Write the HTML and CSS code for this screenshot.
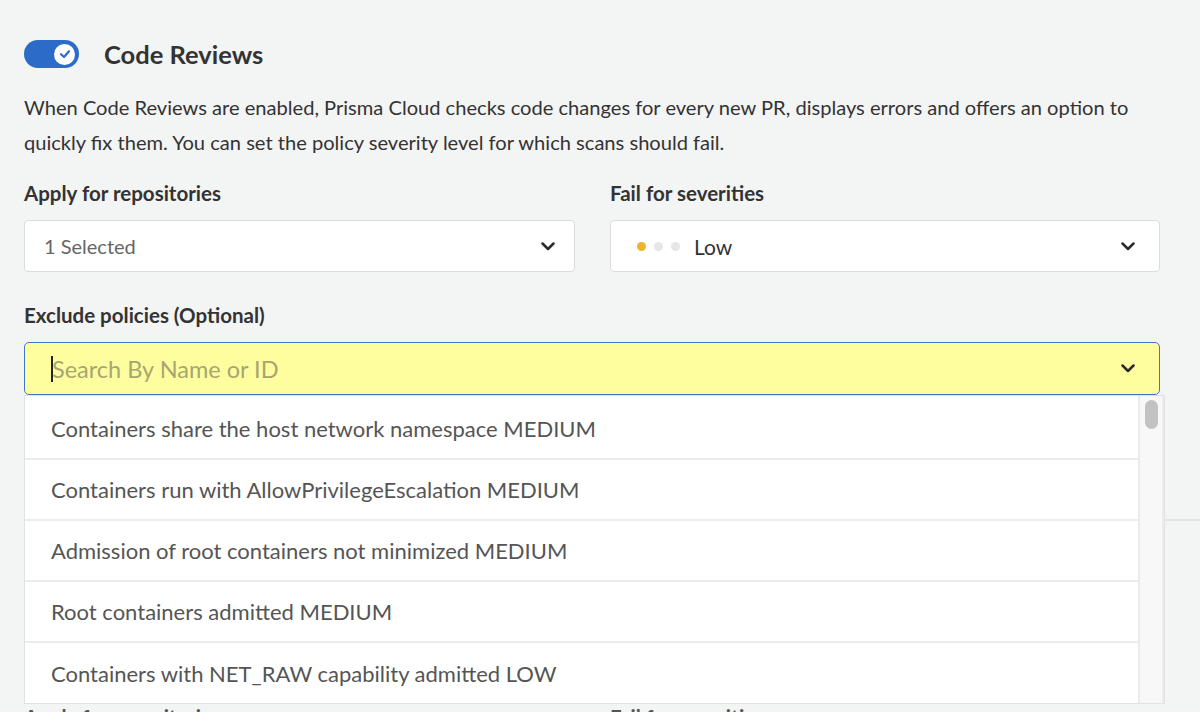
FILE: index.html
```html
<!DOCTYPE html>
<html>
<head>
<meta charset="utf-8">
<link rel="stylesheet" href="styles.css">
</head>
<body>
<div class="page">
  <div class="header">
    <div class="toggle">
      <div class="knob">
        <svg width="14" height="14" viewBox="0 0 14 14"><path d="M3 7.2 L6 10 L11 4.3" fill="none" stroke="#2d6cc9" stroke-width="2.2" stroke-linecap="round" stroke-linejoin="round"/></svg>
      </div>
    </div>
    <h1 class="title">Code Reviews</h1>
  </div>
  <p class="desc">When Code Reviews are enabled, Prisma Cloud checks code changes for every new PR, displays errors and offers an option to quickly fix them. You can set the policy severity level for which scans should fail.</p>
  <div class="cols">
    <div class="field">
      <div class="label">Apply for repositories</div>
      <div class="select">
        <span class="value">1 Selected</span>
        <svg class="chev" width="14" height="9" viewBox="0 0 14 9"><path d="M1.5 1.5 L7 7 L12.5 1.5" fill="none" stroke="#2b2b2b" stroke-width="2.5" stroke-linecap="round" stroke-linejoin="round"/></svg>
      </div>
    </div>
    <div class="field">
      <div class="label">Fail for severities</div>
      <div class="select sev">
        <span class="dots"><i class="dot on"></i><i class="dot"></i><i class="dot"></i></span>
        <span class="value dark">Low</span>
        <svg class="chev" width="14" height="9" viewBox="0 0 14 9"><path d="M1.5 1.5 L7 7 L12.5 1.5" fill="none" stroke="#2b2b2b" stroke-width="2.5" stroke-linecap="round" stroke-linejoin="round"/></svg>
      </div>
    </div>
  </div>
  <div class="label excl">Exclude policies (Optional)</div>
  <div class="combo">
    <div class="search">
      <span class="caret"></span>
      <span class="placeholder">Search By Name or ID</span>
      <svg class="chev" width="14" height="9" viewBox="0 0 14 9"><path d="M1.5 1.5 L7 7 L12.5 1.5" fill="none" stroke="#2b2b2b" stroke-width="2.5" stroke-linecap="round" stroke-linejoin="round"/></svg>
    </div>
    <div class="menu">
      <ul class="options">
        <li>Containers share the host network namespace MEDIUM</li>
        <li>Containers run with AllowPrivilegeEscalation MEDIUM</li>
        <li>Admission of root containers not minimized MEDIUM</li>
        <li>Root containers admitted MEDIUM</li>
        <li>Containers with NET_RAW capability admitted LOW</li>
      </ul>
      <div class="scrollbar"><div class="thumb"></div></div>
    </div>
  </div>
  <div class="behind">
    <div class="divider"></div>
    <div class="cols lower">
      <div class="label">Apply for repositories</div>
      <div class="label">Fail for severities</div>
    </div>
  </div>
</div>
</body>
</html>
```

FILE: styles.css
```css
html, body {
  margin: 0;
  padding: 0;
  background: #f3f4f4;
  font-family: Lato, "Open Sans", sans-serif;
  color: #333;
  overflow: hidden;
  height: 712px;
}
.page {
  padding: 40px 0 0 24px;
  width: 1136px;
}
.header {
  display: flex;
  align-items: center;
  height: 28px;
}
.toggle {
  width: 55px;
  height: 28px;
  border-radius: 14px;
  background: #2c6cc8;
  display: flex;
  align-items: center;
  justify-content: flex-end;
  padding-right: 4px;
  box-sizing: border-box;
}
.knob {
  width: 21px;
  height: 21px;
  border-radius: 50%;
  background: #fff;
  display: flex;
  align-items: center;
  justify-content: center;
}
.title {
  margin: 0 0 0 25px;
  font-size: 25.5px;
  font-weight: 700;
  color: #333;
}
.desc {
  margin: 22px 0 0;
  font-size: 20.1px;
  line-height: 35px;
  color: #333;
}
.cols {
  display: grid;
  grid-template-columns: 551px 550px;
  column-gap: 35px;
  margin-top: 21px;
}
.label {
  font-size: 20.5px;
  font-weight: 700;
  color: #333;
  line-height: 24px;
}
.select {
  margin-top: 15px;
  height: 52px;
  box-sizing: border-box;
  background: #fff;
  border: 1px solid #dcdcdc;
  border-radius: 4px;
  display: flex;
  align-items: center;
  padding: 0 19px;
}
.select .value {
  font-size: 20px;
  color: #666;
  flex: 1;
}
.select .value.dark {
  color: #333;
  font-size: 21px;
}
.sev {
  padding-left: 26px;
  padding-right: 24px;
}
.dots {
  display: flex;
  gap: 8px;
  margin-right: 14px;
}
.dot {
  width: 9px;
  height: 9px;
  border-radius: 50%;
  background: #e5e6e7;
  display: block;
}
.dot.on {
  background: #edb42d;
}
.chev {
  flex: none;
}
.excl {
  margin-top: 31px;
}
.combo {
  position: relative;
  margin-top: 15px;
}
.search {
  height: 53px;
  box-sizing: border-box;
  background: #fefe9e;
  border: 1.5px solid #3d78c6;
  border-radius: 5px;
  display: flex;
  align-items: center;
  padding: 0 24px 0 26px;
}
.caret {
  width: 2px;
  height: 26px;
  background: #222;
  margin-right: -1px;
}
.placeholder {
  flex: 1;
  font-size: 23.5px;
  color: #a6a672;
}
.menu {
  position: absolute;
  top: 53px;
  left: 0;
  width: 1141px;
  height: 309px;
  background: #fff;
  border: 1px solid #e2e2e2;
  box-sizing: border-box;
  display: flex;
  z-index: 2;
}
.options {
  list-style: none;
  margin: 0;
  padding: 2px 0 0;
  flex: 1;
}
.options li {
  height: 61px;
  box-sizing: border-box;
  border-bottom: 2px solid #ececec;
  display: flex;
  align-items: center;
  padding-left: 26px;
  font-size: 22px;
  color: #555;
}
.options li:first-child {
  height: 62px;
}
.options li:last-child {
  border-bottom: none;
}
.scrollbar {
  width: 26px;
  background: #f8f8f8;
  border-left: 2px solid #ebebeb;
  border-right: 2px solid #ebebeb;
  box-sizing: border-box;
  padding: 4px 4px 0 5px;
}
.thumb {
  width: 13px;
  height: 29px;
  border-radius: 7px;
  background: #c2c2c2;
}
.behind {
  margin-top: 124px;
}
.divider {
  height: 2px;
  background: #e4e4e4;
  margin-right: -100px;
}
.lower {
  margin-top: 184px;
}
.lower .label {
  color: #555;
}
```
